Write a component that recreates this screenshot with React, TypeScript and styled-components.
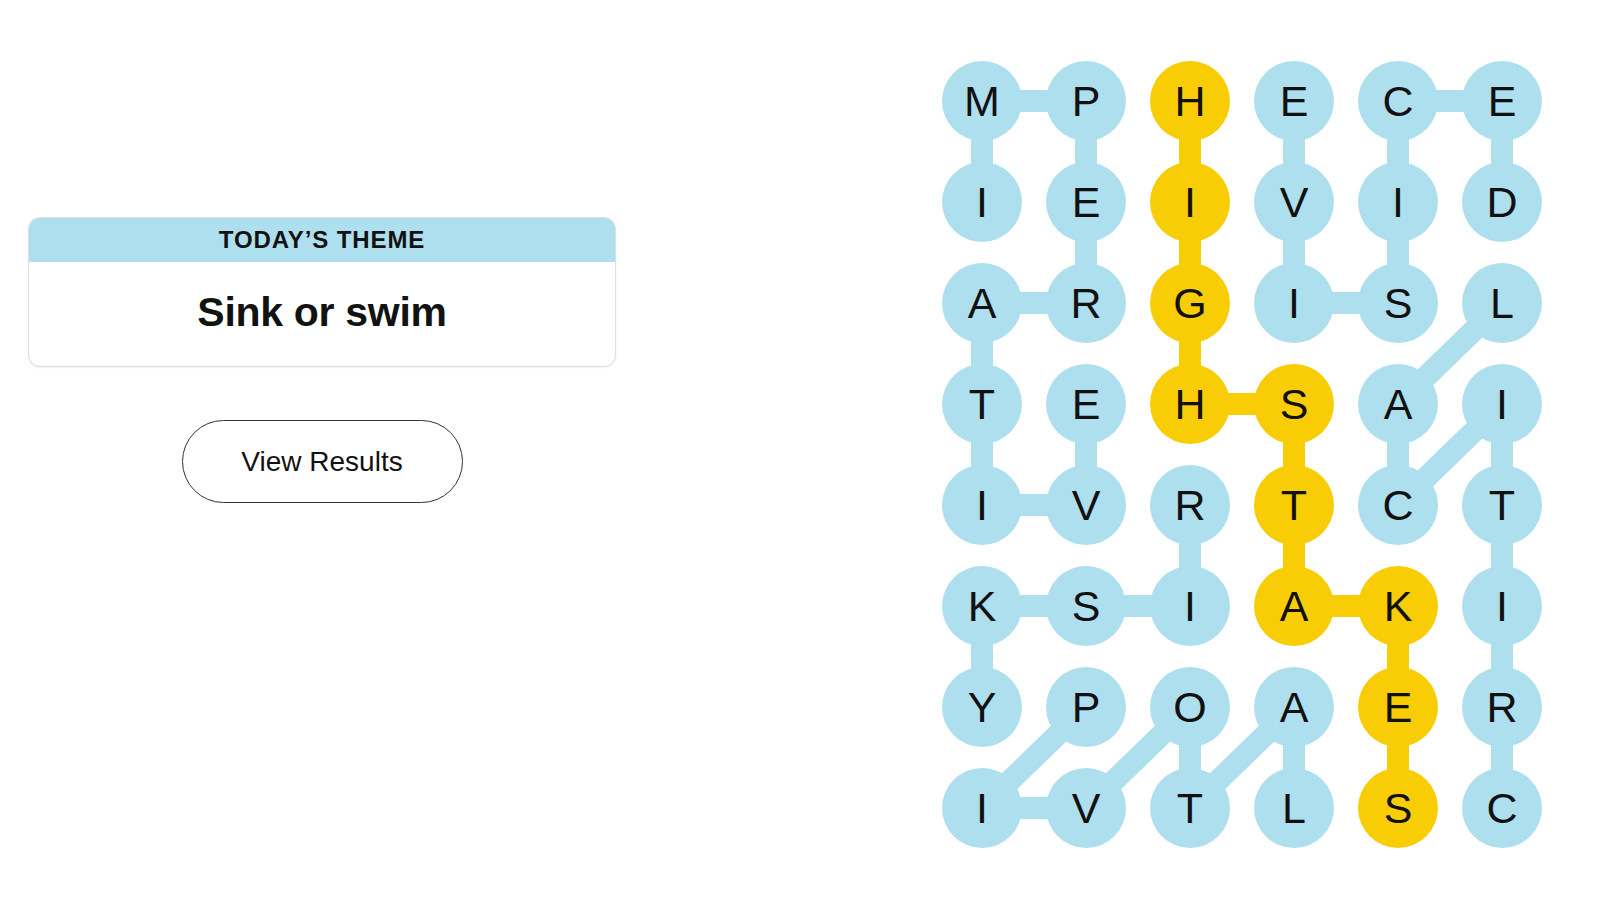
import React from "react";
import styled, { createGlobalStyle } from "styled-components";

const GlobalStyle = createGlobalStyle`
  html, body { margin: 0; padding: 0; background: #ffffff; }
  body { font-family: "Liberation Sans", Arial, sans-serif; color: #121212; }
`;

const BLUE = "#aedfee";
const YELLOW = "#f8cd05";

const LETTERS = [
  "MPHECE",
  "IEIVID",
  "ARGISL",
  "TEHSAI",
  "IVRTCT",
  "KSIAKI",
  "YPOAER",
  "IVTLSC",
];

type Cell = [number, number];
type Word = { path: Cell[]; spangram?: boolean };

const WORDS: Word[] = [
  { path: [[0, 2], [1, 2], [2, 2], [3, 2], [3, 3], [4, 3], [5, 3], [5, 4], [6, 4], [7, 4]], spangram: true },
  { path: [[1, 0], [0, 0], [0, 1], [1, 1], [2, 1], [2, 0], [3, 0], [4, 0], [4, 1], [3, 1]] },
  { path: [[1, 5], [0, 5], [0, 4], [1, 4], [2, 4], [2, 3], [1, 3], [0, 3]] },
  { path: [[7, 5], [6, 5], [5, 5], [4, 5], [3, 5], [4, 4], [3, 4], [2, 5]] },
  { path: [[4, 2], [5, 2], [5, 1], [5, 0], [6, 0]] },
  { path: [[6, 1], [7, 0], [7, 1], [6, 2], [7, 2], [6, 3], [7, 3]] },
];

const CELL = 80;
const COL_GAP = 24;
const ROW_GAP = 21;
const COLS = 6;
const ROWS = 8;
const BOARD_W = COLS * CELL + (COLS - 1) * COL_GAP;
const BOARD_H = ROWS * CELL + (ROWS - 1) * ROW_GAP;

const cx = (c: number) => CELL / 2 + c * (CELL + COL_GAP);
const cy = (r: number) => CELL / 2 + r * (CELL + ROW_GAP);

const Page = styled.main`
  display: flex;
  justify-content: space-between;
  align-items: flex-start;
  width: 1600px;
  height: 900px;
  box-sizing: border-box;
  padding: 0 58px 0 28px;
`;

const LeftPanel = styled.section`
  width: 588px;
  padding-top: 217px;
  display: flex;
  flex-direction: column;
  align-items: center;
  gap: 53px;
`;

const ThemeCard = styled.div`
  width: 100%;
  box-sizing: border-box;
  border: 1px solid #dedede;
  border-radius: 12px;
  overflow: hidden;
  box-shadow: 0 1px 2px rgba(0, 0, 0, 0.06);
  background: #fff;
`;

const ThemeHeader = styled.div`
  height: 44px;
  background: ${BLUE};
  display: flex;
  align-items: center;
  justify-content: center;
  font-family: "Liberation Sans", Arial, sans-serif;
  font-weight: 700;
  font-size: 24px;
  letter-spacing: 0.9px;
  color: #121212;
`;

const ThemeTitle = styled.h1`
  margin: 0;
  height: 104px;
  display: flex;
  align-items: center;
  justify-content: center;
  padding-bottom: 4px;
  box-sizing: border-box;
  font-family: "Liberation Sans", Arial, sans-serif;
  font-weight: 700;
  font-size: 41px;
  letter-spacing: -0.3px;
  color: #121212;
`;

const ResultsButton = styled.button`
  width: 281px;
  height: 83px;
  border: 1.5px solid #333;
  border-radius: 42px;
  background: #fff;
  font-family: "Liberation Sans", Arial, sans-serif;
  font-size: 28px;
  color: #121212;
  cursor: pointer;
`;

const Board = styled.div`
  position: relative;
  margin-top: 61px;
  width: ${BOARD_W}px;
  height: ${BOARD_H}px;
`;

const Connectors = styled.svg`
  position: absolute;
  left: 0;
  top: 0;
  z-index: 0;
`;

const LetterGrid = styled.div`
  position: relative;
  z-index: 1;
  display: grid;
  grid-template-columns: repeat(${COLS}, ${CELL}px);
  grid-auto-rows: ${CELL}px;
  column-gap: ${COL_GAP}px;
  row-gap: ${ROW_GAP}px;
`;

const Letter = styled.button<{ $color: string }>`
  width: ${CELL}px;
  height: ${CELL}px;
  border: none;
  border-radius: 50%;
  padding: 0;
  background: ${(p) => p.$color};
  display: flex;
  align-items: center;
  justify-content: center;
  font-family: "Liberation Sans", Arial, sans-serif;
  font-size: 43px;
  font-weight: 400;
  color: #111;
  line-height: 1;
`;

export default function App() {
  const colorMap: Record<string, string> = {};
  WORDS.forEach((w) => {
    w.path.forEach(([r, c]) => {
      colorMap[`${r}-${c}`] = w.spangram ? YELLOW : BLUE;
    });
  });

  return (
    <>
      <GlobalStyle />
      <Page>
        <LeftPanel>
          <ThemeCard>
            <ThemeHeader>TODAY’S THEME</ThemeHeader>
            <ThemeTitle>Sink or swim</ThemeTitle>
          </ThemeCard>
          <ResultsButton>View Results</ResultsButton>
        </LeftPanel>
        <Board>
          <Connectors width={BOARD_W} height={BOARD_H} viewBox={`0 0 ${BOARD_W} ${BOARD_H}`}>
            {WORDS.map((w, wi) =>
              w.path.slice(1).map(([r, c], i) => {
                const [pr, pc] = w.path[i];
                return (
                  <line
                    key={`${wi}-${i}`}
                    x1={cx(pc)}
                    y1={cy(pr)}
                    x2={cx(c)}
                    y2={cy(r)}
                    stroke={w.spangram ? YELLOW : BLUE}
                    strokeWidth={22}
                  />
                );
              })
            )}
          </Connectors>
          <LetterGrid>
            {LETTERS.map((row, r) =>
              row.split("").map((ch, c) => (
                <Letter key={`${r}-${c}`} $color={colorMap[`${r}-${c}`] || BLUE}>
                  {ch}
                </Letter>
              ))
            )}
          </LetterGrid>
        </Board>
      </Page>
    </>
  );
}
